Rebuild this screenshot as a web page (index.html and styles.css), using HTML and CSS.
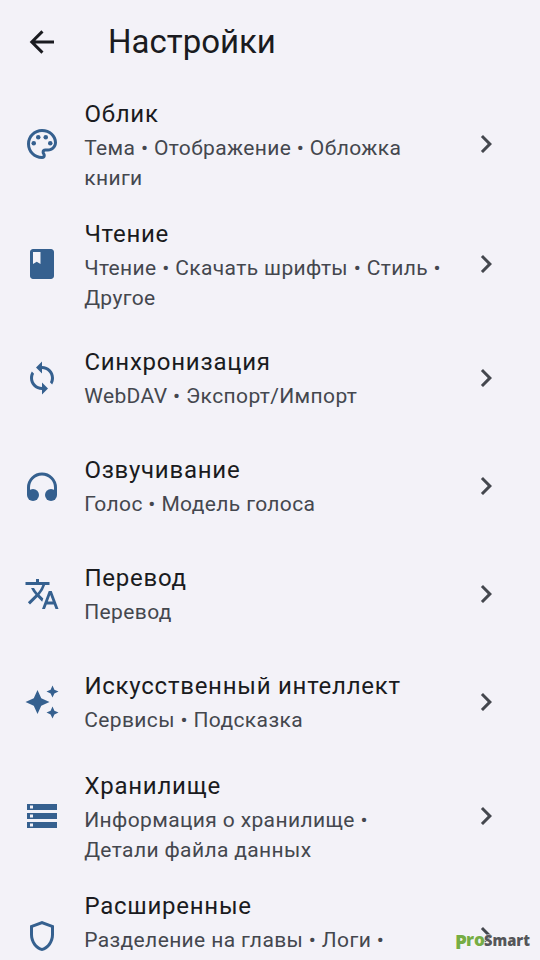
FILE: index.html
```html
<!DOCTYPE html>
<html lang="ru">
<head>
<meta charset="utf-8">
<title>Настройки</title>
<link rel="stylesheet" href="styles.css">
</head>
<body>
<svg class="defs" width="0" height="0"><symbol id="chev" viewBox="0 0 24 24"><path d="M10 6 8.59 7.41 13.17 12l-4.58 4.59L10 18l6-6z"/></symbol></svg>
<header class="bar">
<svg class="back" viewBox="0 0 24 24"><path d="M20 12H5M12.300 4.900 5.200 12l7.100 7.100"/></svg>
<h1>Настройки</h1>
</header>
<main class="list">
<section class="row tall">
<svg class="icon" viewBox="0 0 24 24"><path d="M12 22C6.49 22 2 17.51 2 12S6.49 2 12 2s10 4.04 10 9c0 3.31-2.69 6-6 6h-1.77c-.28 0-.5.22-.5.5 0 .12.05.23.13.33.41.47.64 1.06.64 1.67A2.5 2.5 0 0 1 12 22zm0-18c-4.41 0-8 3.59-8 8s3.59 8 8 8c.28 0 .5-.22.5-.5a.54.54 0 0 0-.14-.35c-.41-.46-.63-1.05-.63-1.65a2.5 2.5 0 0 1 2.500-2.500H16c2.21 0 4-1.79 4-4 0-3.86-3.59-7-8-7z"/><circle cx="6.5" cy="11.5" r="1.5"/><circle cx="9.5" cy="7.5" r="1.5"/><circle cx="14.5" cy="7.5" r="1.5"/><circle cx="17.5" cy="11.5" r="1.5"/></svg>
<div class="text"><h2>Облик</h2><p>Тема • Отображение • Обложка<br>книги</p></div>
<svg class="chev"><use href="#chev"/></svg>
</section>
<section class="row tall">
<svg class="icon" viewBox="0 0 24 24"><path d="M18 2H6c-1.100 0-2 .9-2 2v16c0 1.100.9 2 2 2h12c1.100 0 2-.9 2-2V4c0-1.100-.9-2-2-2zM6 4h5v8l-2.500-1.500L6 12V4z"/></svg>
<div class="text"><h2>Чтение</h2><p>Чтение • Скачать шрифты • Стиль •<br>Другое</p></div>
<svg class="chev"><use href="#chev"/></svg>
</section>
<section class="row">
<svg class="icon" viewBox="0 0 24 24"><path d="M12 4V1L8 5l4 4V6c3.310 0 6 2.690 6 6 0 1.010-.25 1.970-.7 2.800l1.460 1.460C19.540 15.030 20 13.570 20 12c0-4.420-3.580-8-8-8zm0 14c-3.310 0-6-2.690-6-6 0-1.010.25-1.970.7-2.800L5.240 7.740C4.460 8.970 4 10.430 4 12c0 4.420 3.580 8 8 8v3l4-4-4-4v3z"/></svg>
<div class="text"><h2>Синхронизация</h2><p>WebDAV • Экспорт/Импорт</p></div>
<svg class="chev"><use href="#chev"/></svg>
</section>
<section class="row">
<svg class="icon" viewBox="0 0 24 24"><path d="M3 18v-5a9 9 0 0 1 18 0v5" fill="none" stroke="currentColor" stroke-width="2"/><circle cx="6" cy="18" r="4"/><circle cx="18" cy="18" r="4"/></svg>
<div class="text"><h2>Озвучивание</h2><p>Голос • Модель голоса</p></div>
<svg class="chev"><use href="#chev"/></svg>
</section>
<section class="row">
<svg class="icon" viewBox="0 0 24 24"><path d="m12.870 15.070-2.540-2.510.03-.03A17.520 17.520 0 0 0 14.070 6H17V4h-7V2H8v2H1v1.990h11.170C11.500 7.920 10.440 9.750 9 11.350 8.070 10.320 7.300 9.190 6.690 8h-2c.73 1.630 1.730 3.170 2.980 4.560l-5.090 5.020L4 19l5-5 3.110 3.110.76-2.040zM18.500 10h-2L12 22h2l1.120-3h4.750L21 22h2l-4.500-12zm-2.620 7 1.620-4.330L19.120 17h-3.240z"/></svg>
<div class="text"><h2>Перевод</h2><p>Перевод</p></div>
<svg class="chev"><use href="#chev"/></svg>
</section>
<section class="row">
<svg class="icon" viewBox="0 0 24 24"><path d="m19 9 1.250-2.750L23 5l-2.750-1.250L19 1l-1.250 2.750L15 5l2.750 1.250L19 9zm-7.500.500L9 4 6.500 9.500 1 12l5.500 2.500L9 20l2.500-5.500L17 12l-5.500-2.500zM19 15l-1.250 2.750L15 19l2.750 1.250L19 23l1.250-2.750L23 19l-2.750-1.250L19 15z"/></svg>
<div class="text"><h2>Искусственный интеллект</h2><p>Сервисы • Подсказка</p></div>
<svg class="chev"><use href="#chev"/></svg>
</section>
<section class="row tall">
<svg class="icon" viewBox="0 0 24 24"><path d="M2 20h20v-4H2v4zm2-3h2v2H4v-2zM2 4v4h20V4H2zm4 3H4V5h2v2zm-4 7h20v-4H2v4zm2-3h2v2H4v-2z"/></svg>
<div class="text"><h2>Хранилище</h2><p>Информация о хранилище •<br>Детали файла данных</p></div>
<svg class="chev"><use href="#chev"/></svg>
</section>
<section class="row tall">
<svg class="icon" viewBox="0 0 24 24"><path d="M12 2 4 5v6.090c0 5.050 3.410 9.760 8 10.910 4.590-1.150 8-5.860 8-10.910V5l-8-3zm6 9.090c0 4-2.550 7.700-6 8.830-3.450-1.130-6-4.820-6-8.830v-4.700l6-2.250 6 2.250v4.700z"/></svg>
<div class="text"><h2>Расширенные</h2><p>Разделение на главы • Логи •</p></div>
<svg class="chev"><use href="#chev"/></svg>
</section>
</main>
<svg class="mark" viewBox="0 0 84 30"><text class="green" x="5" y="25" font-size="19" textLength="12" lengthAdjust="spacingAndGlyphs">P</text><text class="green" x="16" y="22" font-size="18" textLength="19" lengthAdjust="spacingAndGlyphs">ro</text><text x="34" y="22" font-size="15.500" textLength="46" lengthAdjust="spacingAndGlyphs">Smart</text></svg>
</body>
</html>
```

FILE: styles.css
```css
* { box-sizing: border-box; margin: 0; }
body {
  position: relative;
  height: 960px;
  overflow: hidden;
  background: #f3f2f8;
  color: #1a1b20;
  font-family: Roboto, "Noto Sans", sans-serif;
}
.defs { position: absolute; }
.bar { display: flex; align-items: center; height: 84px; padding-left: 24px; }
.back { width: 36px; height: 36px; fill: none; stroke: #1a1b20; stroke-width: 2; }
h1 { margin-left: 48px; font-size: 33px; font-weight: 400; line-height: 42px; }
.row { display: flex; align-items: center; height: 108px; padding: 0 36px 0 24px; }
.tall { height: 120px; }
.icon { flex: none; width: 36px; height: 36px; color: #35608f; fill: currentColor; }
.text { flex: 1; height: 68px; margin-left: 24px; padding-left: 0.4px; white-space: nowrap; }
h2 { font-size: 24px; font-weight: 400; line-height: 36px; letter-spacing: 0.75px; }
p { margin: 1px 0 0 -0.2px; color: #44474e; font-size: 21px; line-height: 30px; letter-spacing: 0.375px; }
.tall .text { height: 96px; }
.chev { flex: none; width: 36px; height: 36px; fill: #44474e; }
.mark {
  position: absolute;
  left: 450px;
  top: 924px;
  width: 84px;
  height: 30px;
  fill: #55565a;
  stroke: #f8f8fa;
  stroke-width: 1px;
  paint-order: stroke;
  font-family: "Open Sans", sans-serif;
  font-weight: 800;
}
.green { fill: #76ad45; }
```
